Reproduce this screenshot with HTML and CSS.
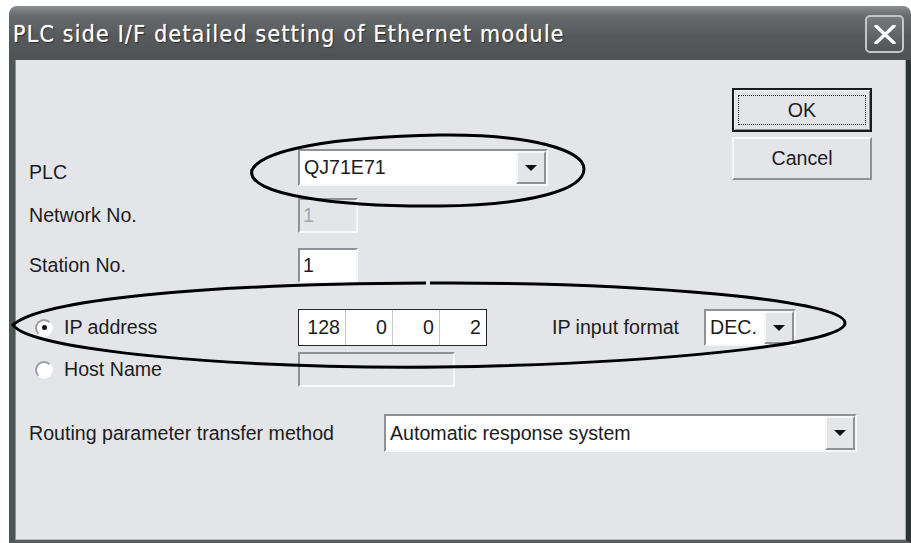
FILE: index.html
```html
<!DOCTYPE html>
<html lang="en">
<head>
  <meta charset="UTF-8">
  <title>PLC side I/F detailed setting of Ethernet module</title>
  <link rel="stylesheet" href="styles.css">
</head>
<body>
  <div class="dialog">
    <div class="titlebar">
      <span class="title">PLC side I/F detailed setting of Ethernet module</span>
      <div class="close">
        <svg width="22" height="19" viewBox="0 0 22 19">
          <path d="M2 1 L20 18 M20 1 L2 18" stroke="#fff" stroke-width="3.4" stroke-linecap="round"/>
        </svg>
      </div>
    </div>

    <div class="client">
      <div class="top">
        <div class="row row-plc">
          <span class="label label-plc">PLC</span>
          <div class="combo combo-plc">
            <span class="value">QJ71E71</span>
            <span class="drop"></span>
          </div>
        </div>
        <div class="actions">
          <div class="btn btn-default"><span class="focus">OK</span></div>
          <div class="btn">Cancel</div>
        </div>
      </div>

      <div class="row row-network">
        <span class="label">Network No.</span>
        <div class="field field-small disabled">1</div>
      </div>

      <div class="row row-station">
        <span class="label">Station No.</span>
        <div class="field field-small">1</div>
      </div>

      <div class="row row-ip">
        <span class="label">
          <span class="radio checked"></span>IP address
        </span>
        <div class="ipfield">
          <span class="octet">128</span>
          <span class="octet">0</span>
          <span class="octet">0</span>
          <span class="octet">2</span>
        </div>
        <span class="ipfmt">IP input format</span>
        <div class="combo combo-dec">
          <span class="value">DEC.</span>
          <span class="drop"></span>
        </div>
      </div>

      <div class="row row-host">
        <span class="label">
          <span class="radio"></span>Host Name
        </span>
        <div class="field field-host disabled"></div>
      </div>

      <div class="row row-routing">
        <span class="label label-wide">Routing parameter transfer method</span>
        <div class="combo combo-routing">
          <span class="value">Automatic response system</span>
          <span class="drop"></span>
        </div>
      </div>
    </div>
  </div>

  <!-- hand drawn marks over the screenshot -->
  <svg class="marks" width="911" height="543" viewBox="0 0 911 543">
    <path d="M252 170 C262 150 330 137 440 135 C530 134 584 150 584 169 C584 190 530 205 440 206 C340 207 245 195 252 170 Z"
          fill="none" stroke="#000" stroke-width="3"/>
    <path d="M430 283 C640 282 845 300 845 323 C845 345 650 364 440 367 C230 369 30 350 13 325 C40 300 200 284 426 283"
          fill="none" stroke="#000" stroke-width="3"/>
  </svg>
</body>
</html>
```

FILE: styles.css
```css
body {
  margin: 0;
  background: #fff;
  position: relative;
  font-family: "Liberation Sans", Arial, sans-serif;
  font-size: 19.6px;
  color: #1c1c1c;
}

.dialog {
  margin: 6px 0 0 9px;
  width: 902px;
  height: 537px;
  display: flex;
  flex-direction: column;
}

.titlebar {
  height: 54px;
  flex: none;
  display: flex;
  align-items: center;
  justify-content: space-between;
  padding: 0 7px 0 4px;
  border-radius: 8px 8px 0 0;
  background: linear-gradient(to bottom, #8a8e90 0%, #676b6d 18%, #565a5c 55%, #4e5254 100%);
}
.title {
  font-family: "DejaVu Sans Condensed", "DejaVu Sans", sans-serif;
  font-stretch: condensed;
  font-size: 23px;
  letter-spacing: 1.2px;
  color: #fff;
  text-shadow: 1px 1px 1px #2a2e30, 0 0 1px #fff;
  margin-top: 2px;
}
.close {
  width: 35px;
  height: 34px;
  margin-top: 2px;
  border: 2px solid #c3c7ca;
  border-radius: 5px;
  background: linear-gradient(to bottom, #767a7c, #505456);
  display: flex;
  align-items: center;
  justify-content: center;
}

.client {
  flex: 1;
  background: #e4e5e9;
  border-left: 6px solid #4f5456;
  border-right: 5px solid #2e3335;
  border-bottom: 3px solid #585d5f;
  box-shadow: inset 1px 0 #8f9395, inset -1px 0 #a6aaac, inset 0 -1px #b8bbbe;
  padding: 28px 34px 0 14px;
}

.top {
  display: flex;
  justify-content: space-between;
  align-items: flex-start;
}

.row {
  display: flex;
  align-items: center;
}
.label {
  width: 269px;
  flex: none;
  display: flex;
  align-items: center;
}
.label-plc {
  padding-top: 10px;
}
.label-wide {
  width: 355px;
}

.row-plc { margin-top: 61px; height: 37px; }
.row-network { margin-top: 12px; height: 35px; }
.row-station { margin-top: 15px; height: 35px; }
.row-ip { margin-top: 26px; height: 37px; }
.row-host { margin-top: 6px; height: 35px; }
.row-routing { margin-top: 27px; height: 38px; }

/* sunken edit boxes */
.field,
.combo {
  box-sizing: border-box;
  height: 100%;
  border: 2px solid;
  border-color: #8e9296 #f6f7f9 #f6f7f9 #8e9296;
  background: #fff;
}
.field {
  padding-left: 3px;
  line-height: 31px;
}
.field-small { width: 60px; }
.field-host { width: 157px; }
.disabled {
  background: #e4e5e9;
  color: #a3a6aa;
}

.combo {
  display: flex;
  align-items: stretch;
}
.combo .value {
  flex: 1;
  padding-left: 4px;
  display: flex;
  align-items: center;
  white-space: nowrap;
  overflow: hidden;
}
.drop {
  width: 26px;
  flex: none;
  background: #e4e5e9;
  border: 2px solid;
  border-color: #f6f7f9 #8e9296 #8e9296 #f6f7f9;
  display: flex;
  align-items: center;
  justify-content: center;
}
.drop::after {
  content: "";
  border-left: 6px solid transparent;
  border-right: 6px solid transparent;
  border-top: 6px solid #111;
}
.combo-plc { width: 250px; }
.combo-dec { width: 92px; margin-left: 25px; }
.combo-routing { width: 473px; }

.ipfield {
  box-sizing: border-box;
  width: 189px;
  height: 100%;
  border: 1px solid #262626;
  background: #fff;
  display: flex;
}
.octet {
  flex: 1;
  text-align: right;
  padding-right: 5px;
  line-height: 35px;
  border-left: 1px solid #c5c8cc;
}
.octet:first-child {
  border-left: none;
}
.ipfmt {
  margin-left: 65px;
}

.radio {
  box-sizing: border-box;
  width: 18px;
  height: 18px;
  margin: 0 11px 0 6px;
  border-radius: 50%;
  border: 2px solid;
  border-color: #9a9ea2 #fafafa #fafafa #9a9ea2;
  background: #fff;
  display: flex;
  align-items: center;
  justify-content: center;
}
.radio.checked::after {
  content: "";
  width: 5px;
  height: 5px;
  border-radius: 50%;
  background: #111;
}

.actions {
  width: 140px;
  display: flex;
  flex-direction: column;
  gap: 5px;
}
.btn {
  box-sizing: border-box;
  height: 43px;
  border: 2px solid;
  border-color: #f6f7f9 #8e9296 #8e9296 #f6f7f9;
  background: #e4e5e9;
  display: flex;
  align-items: center;
  justify-content: center;
}
.btn-default {
  height: 44px;
  border: 2px solid #1a1a1a;
  box-shadow: inset 1px 1px #f6f7f9, inset -1px -1px #8e9296;
  padding: 5px 4px;
  align-items: stretch;
}
.focus {
  flex: 1;
  border: 1px dotted #222;
  display: flex;
  align-items: center;
  justify-content: center;
}

.marks {
  position: absolute;
  top: 0;
  left: 0;
  pointer-events: none;
}
```
